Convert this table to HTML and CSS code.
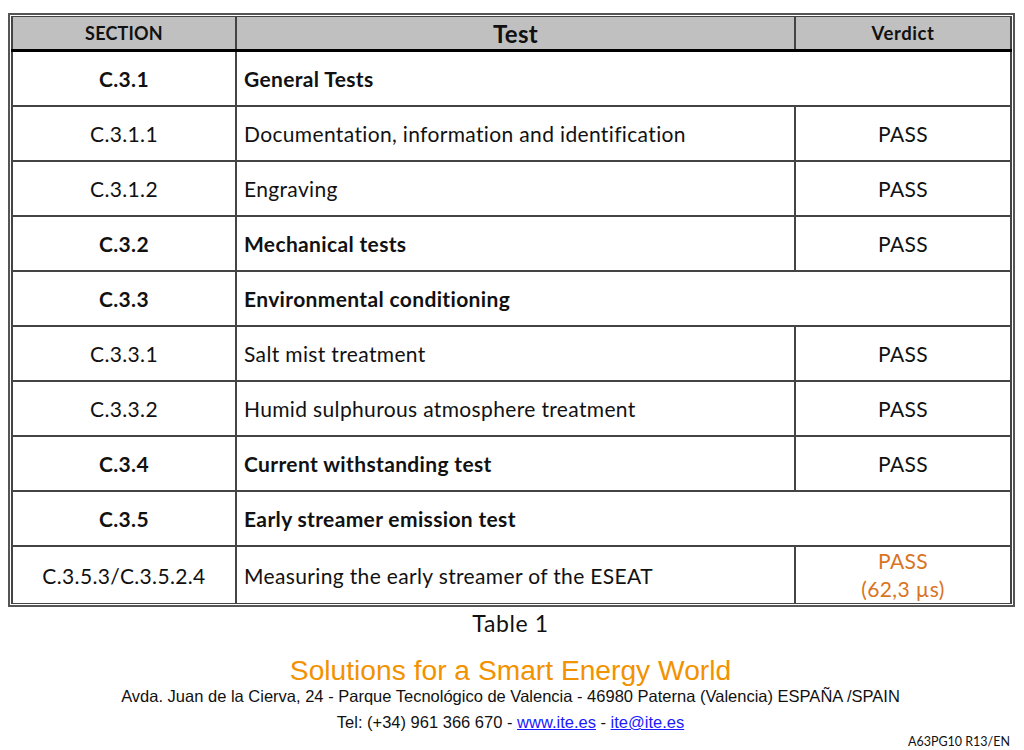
FILE: index.html
```html
<!DOCTYPE html>
<html>
<head>
<meta charset="utf-8">
<link rel="stylesheet" href="styles.css">
</head>
<body>
<div class="page">
  <div class="frame">
    <table class="results">
      <colgroup>
        <col class="c1"><col class="c2"><col class="c3">
      </colgroup>
      <thead>
        <tr>
          <th class="h-sec">SECTION</th>
          <th class="h-test">Test</th>
          <th class="h-ver">Verdict</th>
        </tr>
      </thead>
      <tbody>
        <tr class="bold"><td class="sec">C.3.1</td><td class="test" colspan="2">General Tests</td></tr>
        <tr><td class="sec">C.3.1.1</td><td class="test">Documentation, information and identification</td><td class="ver">PASS</td></tr>
        <tr><td class="sec">C.3.1.2</td><td class="test">Engraving</td><td class="ver">PASS</td></tr>
        <tr class="bold"><td class="sec">C.3.2</td><td class="test">Mechanical tests</td><td class="ver">PASS</td></tr>
        <tr class="bold"><td class="sec">C.3.3</td><td class="test" colspan="2">Environmental conditioning</td></tr>
        <tr><td class="sec">C.3.3.1</td><td class="test">Salt mist treatment</td><td class="ver">PASS</td></tr>
        <tr><td class="sec">C.3.3.2</td><td class="test">Humid sulphurous atmosphere treatment</td><td class="ver">PASS</td></tr>
        <tr class="bold"><td class="sec">C.3.4</td><td class="test">Current withstanding test</td><td class="ver">PASS</td></tr>
        <tr class="bold"><td class="sec">C.3.5</td><td class="test" colspan="2">Early streamer emission test</td></tr>
        <tr class="last"><td class="sec">C.3.5.3/C.3.5.2.4</td><td class="test">Measuring the early streamer of the ESEAT</td><td class="ver orange">PASS<br>(62,3 µs)</td></tr>
      </tbody>
    </table>
  </div>
  <div class="caption">Table 1</div>
  <div class="footer">
    <div class="slogan">Solutions for a Smart Energy World</div>
    <div class="address">Avda. Juan de la Cierva, 24 - Parque Tecnológico de Valencia - 46980 Paterna (Valencia) ESPAÑA /SPAIN</div>
    <div class="contact">Tel: (+34) 961 366 670 - <a href="#">www.ite.es</a> - <a href="#">ite@ite.es</a></div>
  </div>
  <div class="code">A63PG10 R13/EN</div>
</div>
</body>
</html>
```

FILE: styles.css
```css
html, body {
  margin: 0;
  padding: 0;
  background: #ffffff;
}

body {
  font-family: Lato, "Open Sans", sans-serif;
  color: #111111;
  width: 1024px;
  height: 750px;
  overflow: hidden;
}

.page {
  padding: 13px 0 0 8px;
  display: flex;
  flex-direction: column;
}

.frame {
  width: 1001px;
  border: 2px solid #555555;
  padding: 1px;
}

.results {
  width: 999px;
  border-collapse: collapse;
  table-layout: fixed;
  border: 1px solid #444444;
}

.c1 { width: 224px; }
.c2 { width: 559px; }
.c3 { width: 216px; }

.results th {
  background: #c0c0c0;
  height: 32px;
  padding: 0;
  font-weight: 700;
  border-left: 2px solid #444444;
  border-right: 2px solid #444444;
  border-bottom: 3px solid #000000;
  text-align: center;
  vertical-align: middle;
  color: #111111;
}

.h-sec { font-size: 18px; letter-spacing: 0.2px; }
.h-test { font-size: 24px; letter-spacing: 0.3px; }
.h-ver { font-size: 18.5px; letter-spacing: 0.6px; }

.results td {
  height: 53px;
  padding: 0;
  font-size: 21px;
  letter-spacing: 0.35px;
  border: 2px solid #444444;
  vertical-align: middle;
}

.results tr.last td {
  height: 55px;
}

.results tr:last-child td {
  border-bottom: 1px solid #444444;
}

.results td.sec {
  text-align: center;
}

.results td.test {
  text-align: left;
  padding-left: 7px;
}

.results td.ver {
  text-align: center;
}

.results tr.bold td {
  font-weight: 700;
}

.results tr.bold td.ver {
  font-weight: 400;
}

.results td.orange {
  color: #d8741f;
  line-height: 28px;
  padding: 0;
}

.caption {
  width: 1005px;
  text-align: center;
  font-size: 23px;
  letter-spacing: 0.6px;
  margin-top: 2px;
  line-height: 28px;
}

.footer {
  width: 1005px;
  text-align: center;
  font-family: "Liberation Sans", Arial, sans-serif;
  margin-top: 17px;
}

.slogan {
  color: #f39200;
  font-size: 28.2px;
  line-height: 32px;
}

.address {
  font-size: 16.5px;
  line-height: 20px;
  margin-top: 0px;
}

.contact {
  font-size: 16.5px;
  line-height: 20px;
  margin-top: 6px;
}

.contact a {
  color: #1a1aff;
  text-decoration: underline;
}

.code {
  align-self: flex-end;
  margin-right: 14px;
  font-size: 12.5px;
  line-height: 14px;
  margin-top: 3px;
}
```
